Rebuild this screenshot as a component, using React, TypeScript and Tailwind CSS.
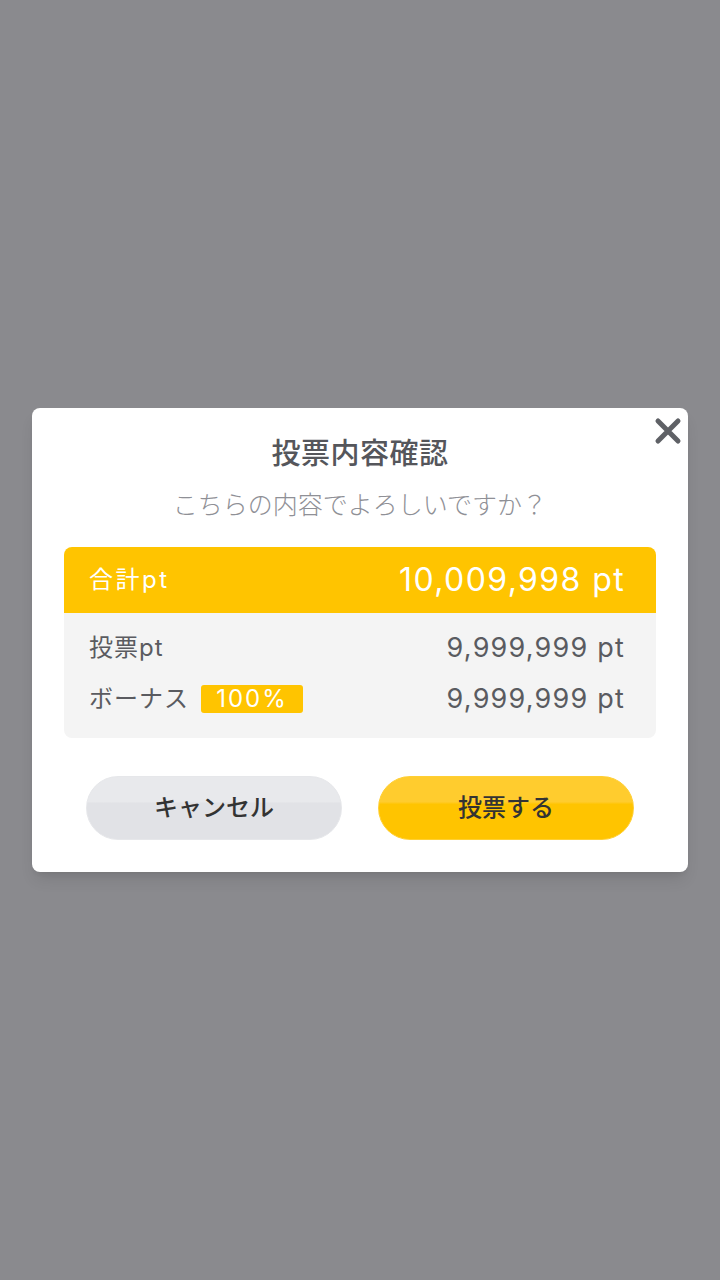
const font = { fontFamily: 'Inter, "Noto Sans CJK JP", sans-serif' };

const CloseIcon = () => (
  <svg width="28" height="28" viewBox="0 0 28 28">
    <path d="M4 4 L24 24 M24 4 L4 24" stroke="#5f6166" strokeWidth="5" strokeLinecap="round" />
  </svg>
);

const Row = ({ label, value, badge }: any) => (
  <div className="flex items-center justify-between h-[48px]">
    <div className="flex items-center gap-3">
      <span className="text-[24px] text-[#5a5b60] tracking-[1px]">{label}</span>
      {badge && (
        <span className="bg-[#ffc400] text-white text-[24px] leading-[28px] w-[102px] text-center rounded-[3px] tracking-[2px]">
          {badge}
        </span>
      )}
    </div>
    <span className="text-[27px] text-[#5a5b60] tracking-[1.2px]">{value}</span>
  </div>
);

export default function App() {
  return (
    <div className="w-[720px] h-[1280px] bg-[#8a8a8e] flex items-center justify-center" style={font}>
      <div className="relative w-[656px] bg-white rounded-[8px] shadow-lg px-8 pt-[26px] pb-8">
        <button className="absolute right-[6px] top-[9px]">
          <CloseIcon />
        </button>
        <h2 className="text-center text-[29px] font-medium text-[#55565b] leading-[40px] tracking-[0.5px]">投票内容確認</h2>
        <p className="text-center text-[25px] font-light text-[#8f9096] mt-[12px] leading-[38px]">こちらの内容でよろしいですか？</p>
        <div className="mt-[23px] rounded-[8px] overflow-hidden">
          <div className="bg-[#ffc400] h-[66px] flex items-center justify-between px-[25px] text-white">
            <span className="text-[24px] tracking-[2.5px]">合計pt</span>
            <span className="text-[32px] pr-[6px] tracking-[1.4px]">10,009,998 pt</span>
          </div>
          <div className="bg-[#f4f4f4] px-[25px] pr-[31px] pt-[11px] pb-[15px] flex flex-col gap-[3px]">
            <Row label="投票pt" value="9,999,999 pt" />
            <Row label="ボーナス" value="9,999,999 pt" badge="100%" />
          </div>
        </div>
        <div className="flex justify-center gap-[36px] mt-[38px]">
          <button className="w-[256px] h-[64px] rounded-full border border-[#e6e7ea] bg-[linear-gradient(to_bottom,#e8e9ec_0%,#e8e9ec_40%,#e1e2e6_42%,#e1e2e6_100%)] text-[24px] text-[#333] font-medium">
            キャンセル
          </button>
          <button className="w-[256px] h-[64px] rounded-full border border-[#ffcf33] bg-[linear-gradient(to_bottom,#ffcc2e_0%,#ffcc2e_40%,#ffc400_44%,#ffc400_100%)] text-[24px] text-[#333] font-medium">
            投票する
          </button>
        </div>
      </div>
    </div>
  );
}
